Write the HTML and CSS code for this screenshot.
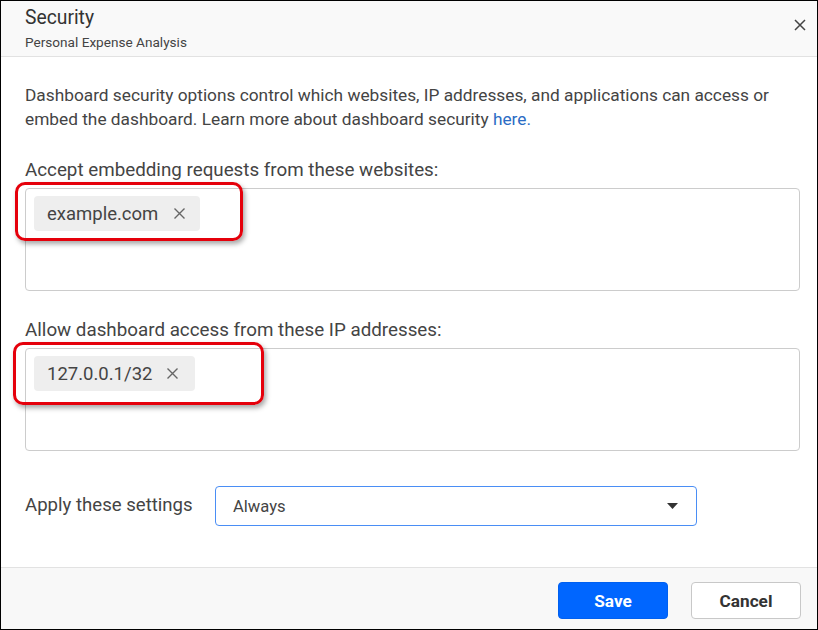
FILE: index.html
```html
<!DOCTYPE html>
<html>
<head>
<meta charset="utf-8">
<link rel="stylesheet" href="styles.css">
</head>
<body>
<div class="dialog">
  <header class="head">
    <div class="titles">
      <div class="title">Security</div>
      <div class="subtitle">Personal Expense Analysis</div>
    </div>
    <svg class="close" width="12" height="12" viewBox="0 0 12 12"><path d="M1 1L11 11M11 1L1 11" stroke="#444" stroke-width="1.5" fill="none"/></svg>
  </header>
  <main class="content">
    <p class="desc">Dashboard security options control which websites, IP addresses, and applications can access or embed the dashboard. Learn more about dashboard security <a class="link">here.</a></p>
    <div class="label l1">Accept embedding requests from these websites:</div>
    <div class="box">
      <span class="chip c1">example.com<svg class="x x1" width="11" height="11" viewBox="0 0 11 11"><path d="M0.5 0.5L10.5 10.5M10.5 0.5L0.5 10.5" stroke="#666" stroke-width="1.4" fill="none"/></svg></span>
      <div class="hl hl1"></div>
    </div>
    <div class="label l2">Allow dashboard access from these IP addresses:</div>
    <div class="box">
      <span class="chip c2">127.0.0.1/32<svg class="x x2" width="11" height="11" viewBox="0 0 11 11"><path d="M0.5 0.5L10.5 10.5M10.5 0.5L0.5 10.5" stroke="#666" stroke-width="1.4" fill="none"/></svg></span>
      <div class="hl hl2"></div>
    </div>
    <div class="apply">
      <span class="applylabel">Apply these settings</span>
      <div class="select"><span>Always</span><svg width="11" height="6" viewBox="0 0 11 6"><path d="M0 0H11L5.5 6Z" fill="#333"/></svg></div>
    </div>
  </main>
  <footer class="foot">
    <button class="btn save">Save</button>
    <button class="btn cancel">Cancel</button>
  </footer>
</div>
</body>
</html>
```
FILE: styles.css
```css
* { box-sizing: border-box; }
body { margin: 0; font-family: Roboto, "Noto Sans", sans-serif; color: #444; background: #fff; }
.dialog { width: 818px; height: 630px; border: 1px solid #000; display: flex; flex-direction: column; background: #fff; }
.head { height: 56px; background: #f9f9f9; border-bottom: 1px solid #e2e2e2; display: flex; justify-content: space-between; padding: 6px 11px 0 24px; flex-shrink: 0; }
.title { font-size: 19.3px; line-height: 22px; color: #333; }
.subtitle { font-size: 13.6px; line-height: 18px; margin-top: 4px; color: #444; }
.close { margin-top: 12px; }
.content { flex: 1; padding: 26px 17px 0 24px; }
.desc { margin: 0; font-size: 17.3px; line-height: 24px; color: #444; }
.link { color: #2b6cc4; }
.label { font-size: 18.8px; line-height: 24px; color: #444; margin-top: 27px; margin-bottom: 6px; white-space: nowrap; }
.box { position: relative; height: 103px; border: 1px solid #ccc; border-radius: 4px; padding: 7px 8px; }
.chip { display: inline-flex; align-items: center; height: 35px; background: #eee; border-radius: 4px; padding-left: 13px; font-size: 18.5px; color: #444; }
.c1 { width: 166px; }
.c2 { width: 161px; }
.x1 { margin-left: 16px; }
.x2 { margin-left: 15px; }
.hl { position: absolute; border: 3px solid #e5000b; border-radius: 10px; box-shadow: 2px 3px 5px rgba(0,0,0,0.35); }
.hl1 { left: -11px; top: -7px; width: 228px; height: 59px; }
.hl2 { left: -13px; top: -7px; width: 251px; height: 63px; }
.apply { display: flex; align-items: center; margin-top: 35px; }
.applylabel { width: 190px; font-size: 18.6px; color: #444; margin-top: -3px; }
.select { width: 482px; height: 40px; border: 1.5px solid #4a8ef5; border-radius: 4px; display: flex; align-items: center; justify-content: space-between; padding: 0 18px 0 17px; font-size: 16.6px; color: #444; }
.foot { height: 62px; background: #f8f8f8; border-top: 1px solid #e2e2e2; display: flex; justify-content: flex-end; gap: 23px; padding: 14px 16px 0 0; flex-shrink: 0; }
.btn { width: 110px; height: 37px; border-radius: 4px; font-family: Roboto, sans-serif; font-size: 17.2px; font-weight: bold; }
.save { background: #0066ff; color: #fff; border: 1px solid #0060f0; }
.cancel { background: #fff; color: #333; border: 1px solid #c8c8c8; }
```
